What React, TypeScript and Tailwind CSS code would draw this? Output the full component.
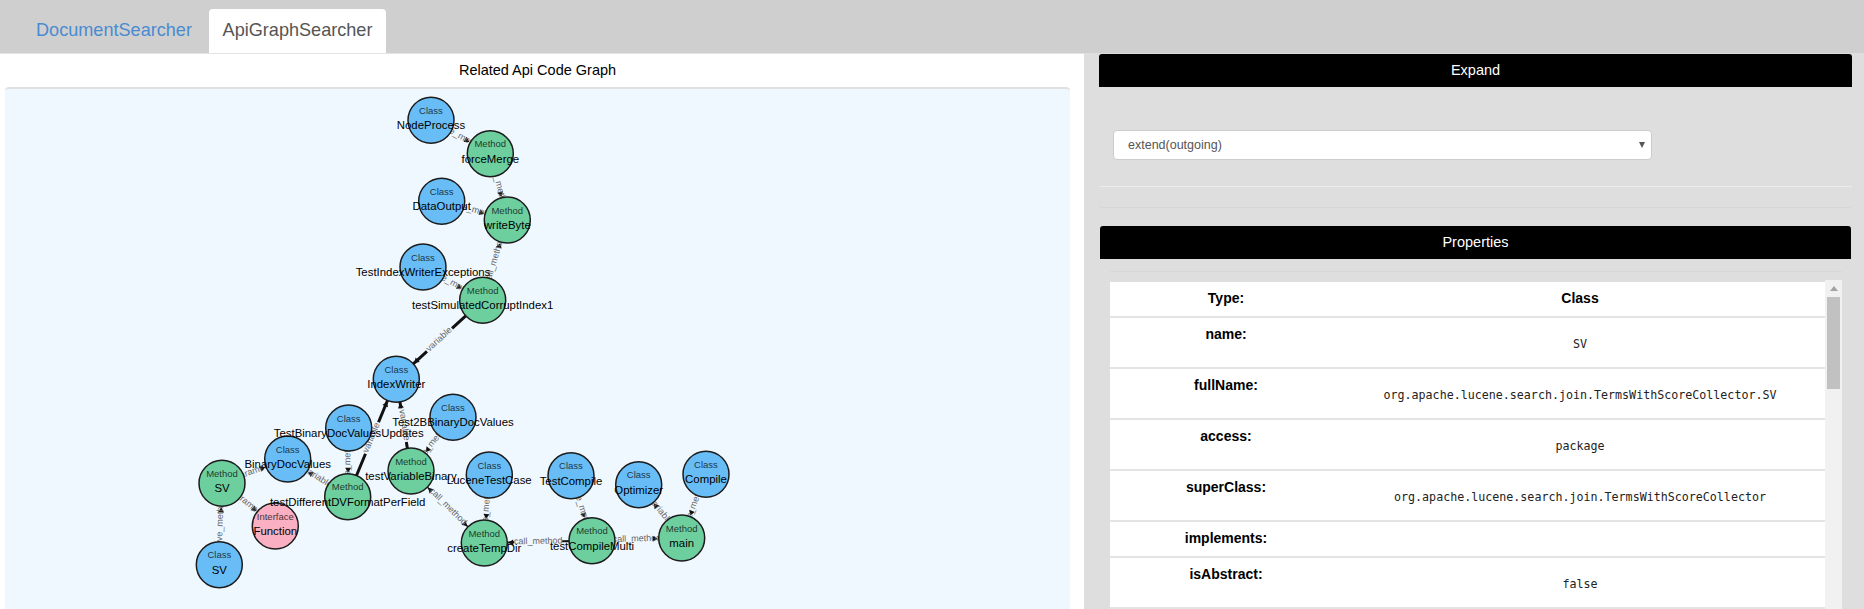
const R = 23;

type Kind = "Class" | "Method" | "Interface";

const colors: Record<Kind, string> = {
  Class: "#68bdf6",
  Method: "#6dce9e",
  Interface: "#faafc2",
};

// graph coordinates are relative to the canvas top left
const ox = 5;
const oy = 89;

const nodes: Record<string, { x: number; y: number; kind: Kind; name: string }> = {
  nodeProcess: { x: 431, y: 120.3, kind: "Class", name: "NodeProcess" },
  forceMerge: { x: 490.3, y: 153.7, kind: "Method", name: "forceMerge" },
  dataOutput: { x: 441.7, y: 201.3, kind: "Class", name: "DataOutput" },
  writeByte: { x: 507.3, y: 220, kind: "Method", name: "writeByte" },
  exceptions: { x: 423, y: 267, kind: "Class", name: "TestIndexWriterExceptions" },
  corrupt: { x: 482.7, y: 300.3, kind: "Method", name: "testSimulatedCorruptIndex1" },
  indexWriter: { x: 396.3, y: 379.3, kind: "Class", name: "IndexWriter" },
  test2b: { x: 453, y: 417.3, kind: "Class", name: "Test2BBinaryDocValues" },
  updates: { x: 348.7, y: 428, kind: "Class", name: "TestBinaryDocValuesUpdates" },
  binaryDoc: { x: 287.7, y: 459, kind: "Class", name: "BinaryDocValues" },
  variableBinary: { x: 411, y: 471, kind: "Method", name: "testVariableBinary" },
  perField: { x: 347.7, y: 496.7, kind: "Method", name: "testDifferentDVFormatPerField" },
  svMethod: { x: 222, y: 483.3, kind: "Method", name: "SV" },
  fn: { x: 275.3, y: 526, kind: "Interface", name: "Function" },
  svClass: { x: 219.3, y: 564.7, kind: "Class", name: "SV" },
  lucene: { x: 489.3, y: 475, kind: "Class", name: "LuceneTestCase" },
  testCompile: { x: 571, y: 475.7, kind: "Class", name: "TestCompile" },
  optimizer: { x: 638.7, y: 484.7, kind: "Class", name: "Optimizer" },
  compile: { x: 706, y: 474.3, kind: "Class", name: "Compile" },
  main: { x: 681.7, y: 538, kind: "Method", name: "main" },
  compileMulti: { x: 592, y: 540.7, kind: "Method", name: "testCompileMulti" },
  tempDir: { x: 484.3, y: 543, kind: "Method", name: "createTempDir" },
};

const edges: { from: string; to: string; label: string; width: number; both?: boolean }[] = [
  { from: "nodeProcess", to: "forceMerge", label: "have_method", width: 1.5 },
  { from: "forceMerge", to: "writeByte", label: "call_method", width: 1.5 },
  { from: "dataOutput", to: "writeByte", label: "have_method", width: 1.5 },
  { from: "corrupt", to: "writeByte", label: "call_method", width: 1.5 },
  { from: "exceptions", to: "corrupt", label: "have_method", width: 1.5 },
  { from: "corrupt", to: "indexWriter", label: "variable", width: 3 },
  { from: "perField", to: "indexWriter", label: "variable", width: 3 },
  { from: "variableBinary", to: "indexWriter", label: "variable", width: 3 },
  { from: "test2b", to: "variableBinary", label: "have_method", width: 1.5 },
  { from: "updates", to: "perField", label: "have_method", width: 1.5 },
  { from: "perField", to: "binaryDoc", label: "variable", width: 1.5 },
  { from: "svMethod", to: "binaryDoc", label: "parameter", width: 1.5 },
  { from: "svMethod", to: "fn", label: "parameter", width: 1.5 },
  { from: "svClass", to: "svMethod", label: "have_method", width: 1.5 },
  { from: "variableBinary", to: "tempDir", label: "call_method", width: 1.5, both: true },
  { from: "lucene", to: "tempDir", label: "have_method", width: 1.5 },
  { from: "testCompile", to: "compileMulti", label: "have_method", width: 1.5 },
  { from: "compileMulti", to: "tempDir", label: "call_method", width: 2 },
  { from: "compileMulti", to: "main", label: "call_method", width: 2 },
  { from: "main", to: "optimizer", label: "variable", width: 1.5 },
  { from: "compile", to: "main", label: "have_method", width: 1.5 },
];

const gapFor: Record<string, number> = {
  have_method: 50,
  call_method: 48,
  variable: 34,
  parameter: 42,
};

function Arrow({ x, y, angle }: { x: number; y: number; angle: number }) {
  return <polygon points="0,0 -5,-3 -5,3" fill="#111" transform={`translate(${x} ${y}) rotate(${angle})`} />;
}

function Edge({ from, to, label, width, both }: (typeof edges)[number]) {
  const a = nodes[from];
  const b = nodes[to];
  const ax = a.x - ox;
  const ay = a.y - oy;
  const bx = b.x - ox;
  const by = b.y - oy;
  const len = Math.hypot(bx - ax, by - ay);
  const ux = (bx - ax) / len;
  const uy = (by - ay) / len;
  const angle = (Math.atan2(uy, ux) * 180) / Math.PI;
  const mx = (ax + bx) / 2;
  const my = (ay + by) / 2;
  const half = gapFor[label] / 2;
  const textAngle = angle > 90 || angle < -90 ? angle + 180 : angle;
  return (
    <g>
      <line x1={ax} y1={ay} x2={mx - ux * half} y2={my - uy * half} stroke="#111" strokeWidth={width} />
      <line x1={mx + ux * half} y1={my + uy * half} x2={bx} y2={by} stroke="#111" strokeWidth={width} />
      <Arrow x={bx - ux * (R + 1)} y={by - uy * (R + 1)} angle={angle} />
      {both && <Arrow x={ax + ux * (R + 1)} y={ay + uy * (R + 1)} angle={angle + 180} />}
      <text
        x={mx}
        y={my + 2}
        textAnchor="middle"
        fontSize="9"
        fill="#666"
        transform={`rotate(${textAngle} ${mx} ${my})`}
      >
        {label}
      </text>
    </g>
  );
}

function Graph() {
  const list = Object.values(nodes);
  return (
    <svg width="1065" height="522" className="block font-['Liberation_Sans',Arial,sans-serif]">
      {edges.map((e) => (
        <Edge key={e.from + e.to} {...e} />
      ))}
      {list.map((n) => (
        <circle key={n.name + n.kind} cx={n.x - ox} cy={n.y - oy} r={R} fill={colors[n.kind]} stroke="#1c1c1c" strokeWidth="1.5" />
      ))}
      {list.map((n) => (
        <g key={n.name + n.kind} textAnchor="middle">
          <text x={n.x - ox} y={n.y - oy - 6.5} fontSize="9.5" fill="#000" fillOpacity="0.75">
            {n.kind}
          </text>
          <text x={n.x - ox} y={n.y - oy + 9} fontSize="11.4" fill="#000">
            {n.name}
          </text>
        </g>
      ))}
    </svg>
  );
}

const rows = [
  { label: "Type:", value: "Class", h: "h-[36px]", head: true },
  { label: "name:", value: "SV", h: "h-[51px]" },
  { label: "fullName:", value: "org.apache.lucene.search.join.TermsWithScoreCollector.SV", h: "h-[51px]" },
  { label: "access:", value: "package", h: "h-[51px]" },
  { label: "superClass:", value: "org.apache.lucene.search.join.TermsWithScoreCollector", h: "h-[51px]" },
  { label: "implements:", value: "", h: "h-[36px]" },
  { label: "isAbstract:", value: "false", h: "h-[51px]" },
];

function PanelHead({ title }: { title: string }) {
  return (
    <div className="h-[33px] bg-black rounded-t-[3px] flex items-center justify-center text-white text-[14.5px]">
      {title}
    </div>
  );
}

export default function App() {
  return (
    <div className="h-[609px] overflow-hidden bg-[#dedede] font-['Liberation_Sans',Arial,sans-serif] flex flex-col">
      <div className="h-[53px] shrink-0 bg-[#cfcfcf] flex items-end pl-[21px] gap-[2px] text-[18.1px]">
        <div className="h-[44px] w-[186px] flex items-center justify-center text-[#4a8bd0]">DocumentSearcher</div>
        <div className="h-[44px] w-[177px] flex items-center justify-center bg-white rounded-t-[4px] text-[#555]">ApiGraphSearcher</div>
      </div>

      <div className="flex-1 flex min-h-0">
        <div className="w-[1084px] bg-white pl-[5px] pr-[14px] border-t border-[#e4e4e4]">
          <div className="h-[33px] flex items-center justify-center text-[14.5px] text-black">Related Api Code Graph</div>
          <div className="h-[522px] bg-[#f0f8ff] border-t-2 border-[#e0e0e0] rounded-t-[4px] overflow-hidden">
            <Graph />
          </div>
        </div>

        <div className="flex-1 pl-[15px] pr-[12px] pt-px min-w-0">
          <div className="h-[153px] rounded-[3px] shadow-[0_1px_1px_#d6d6d6] flex flex-col">
            <PanelHead title="Expand" />
            <div className="flex-1 border-b border-[#ececec] pl-[14px] pt-[43px]">
              <div className="w-[539px] h-[30px] bg-white border border-[#ccc] rounded-[4px] pl-[14px] pr-[5px] flex items-center justify-between text-[12.5px] text-[#555]">
                <span>extend(outgoing)</span>
                <svg width="8" height="8" viewBox="0 0 8 8">
                  <polygon points="1,1 7,1 4,7" fill="#555" />
                </svg>
              </div>
            </div>
            <div className="h-[20px]" />
          </div>

          <div className="mt-[19px] mx-px">
            <PanelHead title="Properties" />
            <div className="px-[10px] pt-[12px]">
              <div className="mr-[-1px] border-t border-[#d8d8d8] pt-[8px] flex">
                <div className="flex-1 pt-[2px]">
                  {rows.map((r) => (
                    <div key={r.label} className={`${r.h} box-border bg-white border-b-2 border-[#e4e4e4] grid grid-cols-[232px_1fr]`}>
                      <div className="text-center font-bold text-[14px] text-black pt-[8px] leading-[16px]">{r.label}</div>
                      <div
                        className={
                          r.head
                            ? "text-center font-bold text-[14px] text-black pt-[8px] leading-[16px] pr-[7px]"
                            : "text-center font-['DejaVu_Sans_Mono',monospace] text-[11.67px] text-[#222] pt-[18px] leading-[16px] pr-[7px]"
                        }
                      >
                        {r.value}
                      </div>
                    </div>
                  ))}
                </div>
                <div className="w-[17px] shrink-0 bg-[#f1f1f1] h-[340px] flex flex-col items-center pt-[6px]">
                  <svg width="8" height="5" viewBox="0 0 8 5">
                    <polygon points="4,0 8,5 0,5" fill="#a3a3a3" />
                  </svg>
                  <div className="w-[13px] h-[92px] bg-[#c1c1c1] mt-[6px]" />
                </div>
              </div>
            </div>
          </div>
        </div>
      </div>
    </div>
  );
}
